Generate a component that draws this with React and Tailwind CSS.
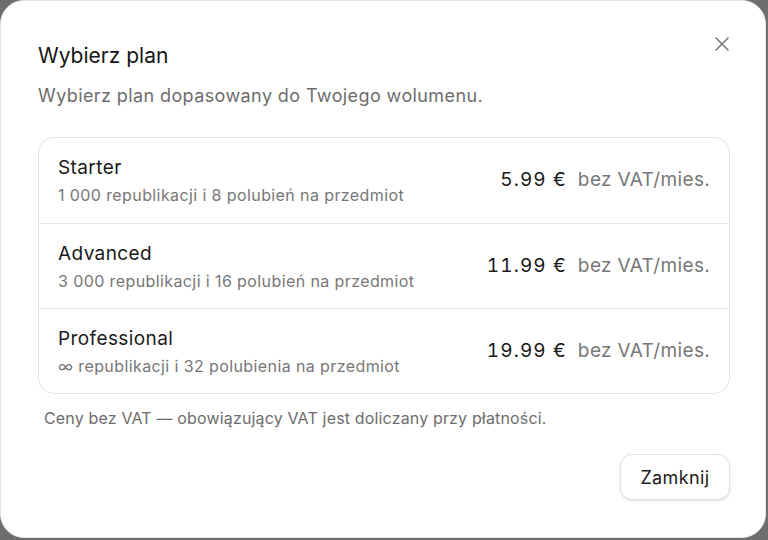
import React from 'react';

const plans = [
    { name: 'Starter', desc: '1 000 republikacji i 8 polubień na przedmiot', price: '5.99 €' },
    { name: 'Advanced', desc: '3 000 republikacji i 16 polubień na przedmiot', price: '11.99 €' },
    { name: 'Professional', desc: '∞ republikacji i 32 polubienia na przedmiot', price: '19.99 €' },
];

export default function App() {
    return (
        <div className="w-[768px] h-[540px] bg-[#6e6e6e] font-['Inter',sans-serif] tracking-[0.025em]">
            <div className="relative w-[766px] h-[538px] bg-white rounded-[24px] border border-[#e4e4e4] px-[37px] pt-[40px]">
                <button className="absolute right-[35px] top-[35px] text-[#7a7a7a]">
                    <svg width="16" height="16" viewBox="0 0 16 16" fill="none" stroke="currentColor" strokeWidth="1.6" strokeLinecap="round">
                        <path d="M2 2L14 14M14 2L2 14" />
                    </svg>
                </button>
                <h2 className="text-[21px] leading-[30px] text-[#161616] tracking-normal">Wybierz plan</h2>
                <p className="mt-[12px] text-[18px] leading-[26px] text-[#6d6d6d]">Wybierz plan dopasowany do Twojego wolumenu.</p>

                <div className="mt-[28px] w-[692px] border border-[#e6e6e6] rounded-[16px]">
                    {plans.map((p, i) => (
                        <div key={p.name} className={`h-[85px] flex items-center justify-between px-[19px] ${i > 0 ? 'border-t border-[#e6e6e6]' : ''}`}>
                            <div className="flex flex-col">
                                <span className="text-[19px] leading-[26px] text-[#1a1a1a]">{p.name}</span>
                                <span className="mt-[3px] text-[16px] leading-[22px] text-[#777]">{p.desc}</span>
                            </div>
                            <div className="flex items-baseline gap-[11px] text-[19px] tabular-nums">
                                <span className="text-[#1a1a1a] tracking-[0.06em]">{p.price}</span>
                                <span className="text-[#777]">bez VAT/mies.</span>
                            </div>
                        </div>
                    ))}
                </div>

                <p className="mt-[13px] ml-[6px] text-[16px] leading-[22px] text-[#6d6d6d] tracking-[0.01em]">
                    Ceny bez VAT — obowiązujący VAT jest doliczany przy płatności.
                </p>

                <div className="mt-[25px] flex justify-end w-[692px]">
                    <button className="h-[46px] w-[110px] rounded-[12px] border border-[#e2e2e2] bg-white shadow-sm text-[18px] text-[#1a1a1a]">
                        Zamknij
                    </button>
                </div>
            </div>
        </div>
    );
}
